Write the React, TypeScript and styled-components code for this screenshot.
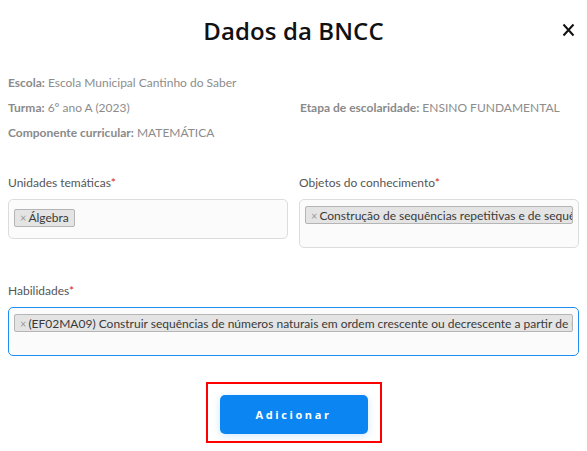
import React from "react";
import styled, { createGlobalStyle } from "styled-components";

const Global = createGlobalStyle`
  html, body { margin: 0; padding: 0; background: #fff; }
  body { font-family: Lato, "Open Sans", sans-serif; }
  * { box-sizing: border-box; }
`;

const Modal = styled.div`
  width: 587px;
  height: 451px;
  padding: 0 8px;
  background: #fff;
  display: flex;
  flex-direction: column;
`;

const Header = styled.div`
  height: 60px;
  display: flex;
  align-items: center;
  justify-content: center;
  position: relative;
`;

const Title = styled.h1`
  margin: 0;
  font-family: "Open Sans", sans-serif;
  font-weight: 600;
  font-size: 24px;
  color: #111;
  letter-spacing: 0.1px;
`;

const Close = styled.button`
  position: absolute;
  right: 3px;
  top: 22px;
  width: 16px;
  height: 16px;
  padding: 0;
  border: 0;
  background: none;
  display: flex;
  align-items: center;
  justify-content: center;
  cursor: pointer;
`;

const Info = styled.div`
  margin-top: 10px;
  display: grid;
  grid-template-columns: 292px 1fr;
  grid-auto-rows: 25px;
  align-items: center;
`;

const InfoItem = styled.div`
  font-size: 12px;
  color: #8c8c8c;
  white-space: nowrap;
`;

const InfoKey = styled.span`
  font-weight: 700;
  color: #8a8a8a;
`;

const FieldGrid = styled.div`
  margin-top: 29px;
  display: grid;
  grid-template-columns: 280px 280px;
  column-gap: 11px;
  align-items: start;
`;

const Field = styled.div<{ $top?: number }>`
  display: flex;
  flex-direction: column;
  margin-top: ${(p) => p.$top ?? 0}px;
`;

const Label = styled.label`
  font-size: 12px;
  line-height: 17px;
  color: #555;
  margin-bottom: 8px;
`;

const Req = styled.span`
  color: #e0201c;
`;

const Select = styled.div<{ $h: number; $focus?: boolean }>`
  height: ${(p) => p.$h}px;
  border: 1px solid ${(p) => (p.$focus ? "#1f8ef1" : "#dcdcdc")};
  border-radius: 5px;
  background: #fbfbfb;
  padding: 6px 5px 0 5px;
  overflow: hidden;
`;

const Chip = styled.span<{ $full?: boolean }>`
  display: ${(p) => (p.$full ? "flex" : "inline-flex")};
  align-items: center;
  height: 18px;
  max-width: 100%;
  background: #e4e4e4;
  border: 1px solid #b5b5b5;
  border-radius: 2px;
  padding: 0 5px;
  font-size: 12px;
  color: #3a3a3a;
  white-space: nowrap;
  overflow: hidden;
`;

const ChipX = styled.span`
  color: #999;
  font-size: 11px;
  margin-right: 2px;
`;

const Footer = styled.div`
  margin-top: 26px;
  display: flex;
  justify-content: center;
`;

const Highlight = styled.div`
  border: 2px solid #ff0000;
  padding: 11px 12px 7px 12px;
`;

const AddButton = styled.button`
  width: 148px;
  height: 39px;
  border: 0;
  border-radius: 5px;
  background: #0b85f2;
  color: #fff;
  font-family: "Open Sans", sans-serif;
  font-weight: 700;
  font-size: 11px;
  letter-spacing: 2.6px;
  box-shadow: 0 2px 8px rgba(11, 133, 242, 0.18);
  cursor: pointer;
`;

export default function App() {
  return (
    <Modal>
      <Global />
      <Header>
        <Title>Dados da BNCC</Title>
        <Close aria-label="Fechar">
          <svg width="13" height="14" viewBox="0 0 13 14">
            <path d="M1.5 1.5 L11.5 12.5 M11.5 1.5 L1.5 12.5" stroke="#111" strokeWidth="2" strokeLinecap="butt" />
          </svg>
        </Close>
      </Header>

      <Info>
        <InfoItem>
          <InfoKey>Escola:</InfoKey> Escola Municipal Cantinho do Saber
        </InfoItem>
        <InfoItem />
        <InfoItem>
          <InfoKey>Turma:</InfoKey> 6º ano A (2023)
        </InfoItem>
        <InfoItem>
          <InfoKey>Etapa de escolaridade:</InfoKey> ENSINO FUNDAMENTAL
        </InfoItem>
        <InfoItem>
          <InfoKey>Componente curricular:</InfoKey> MATEMÁTICA
        </InfoItem>
      </Info>

      <FieldGrid>
        <Field>
          <Label>
            Unidades temáticas<Req>*</Req>
          </Label>
          <Select $h={40}>
            <Chip>
              <ChipX>×</ChipX>Álgebra
            </Chip>
          </Select>
        </Field>
        <Field>
          <Label>
            Objetos do conhecimento<Req>*</Req>
          </Label>
          <Select $h={49}>
            <Chip $full>
              <ChipX>×</ChipX>Construção de sequências repetitivas e de sequências recursivas
            </Chip>
          </Select>
        </Field>
      </FieldGrid>

      <Field $top={34}>
        <Label>
          Habilidades<Req>*</Req>
        </Label>
        <Select $h={49} $focus>
          <Chip $full>
            <ChipX>×</ChipX>(EF02MA09) Construir sequências de números naturais em ordem crescente ou decrescente a partir de um número qualquer, utilizando uma regularidade estabelecida.
          </Chip>
        </Select>
      </Field>

      <Footer>
        <Highlight>
          <AddButton>Adicionar</AddButton>
        </Highlight>
      </Footer>
    </Modal>
  );
}
